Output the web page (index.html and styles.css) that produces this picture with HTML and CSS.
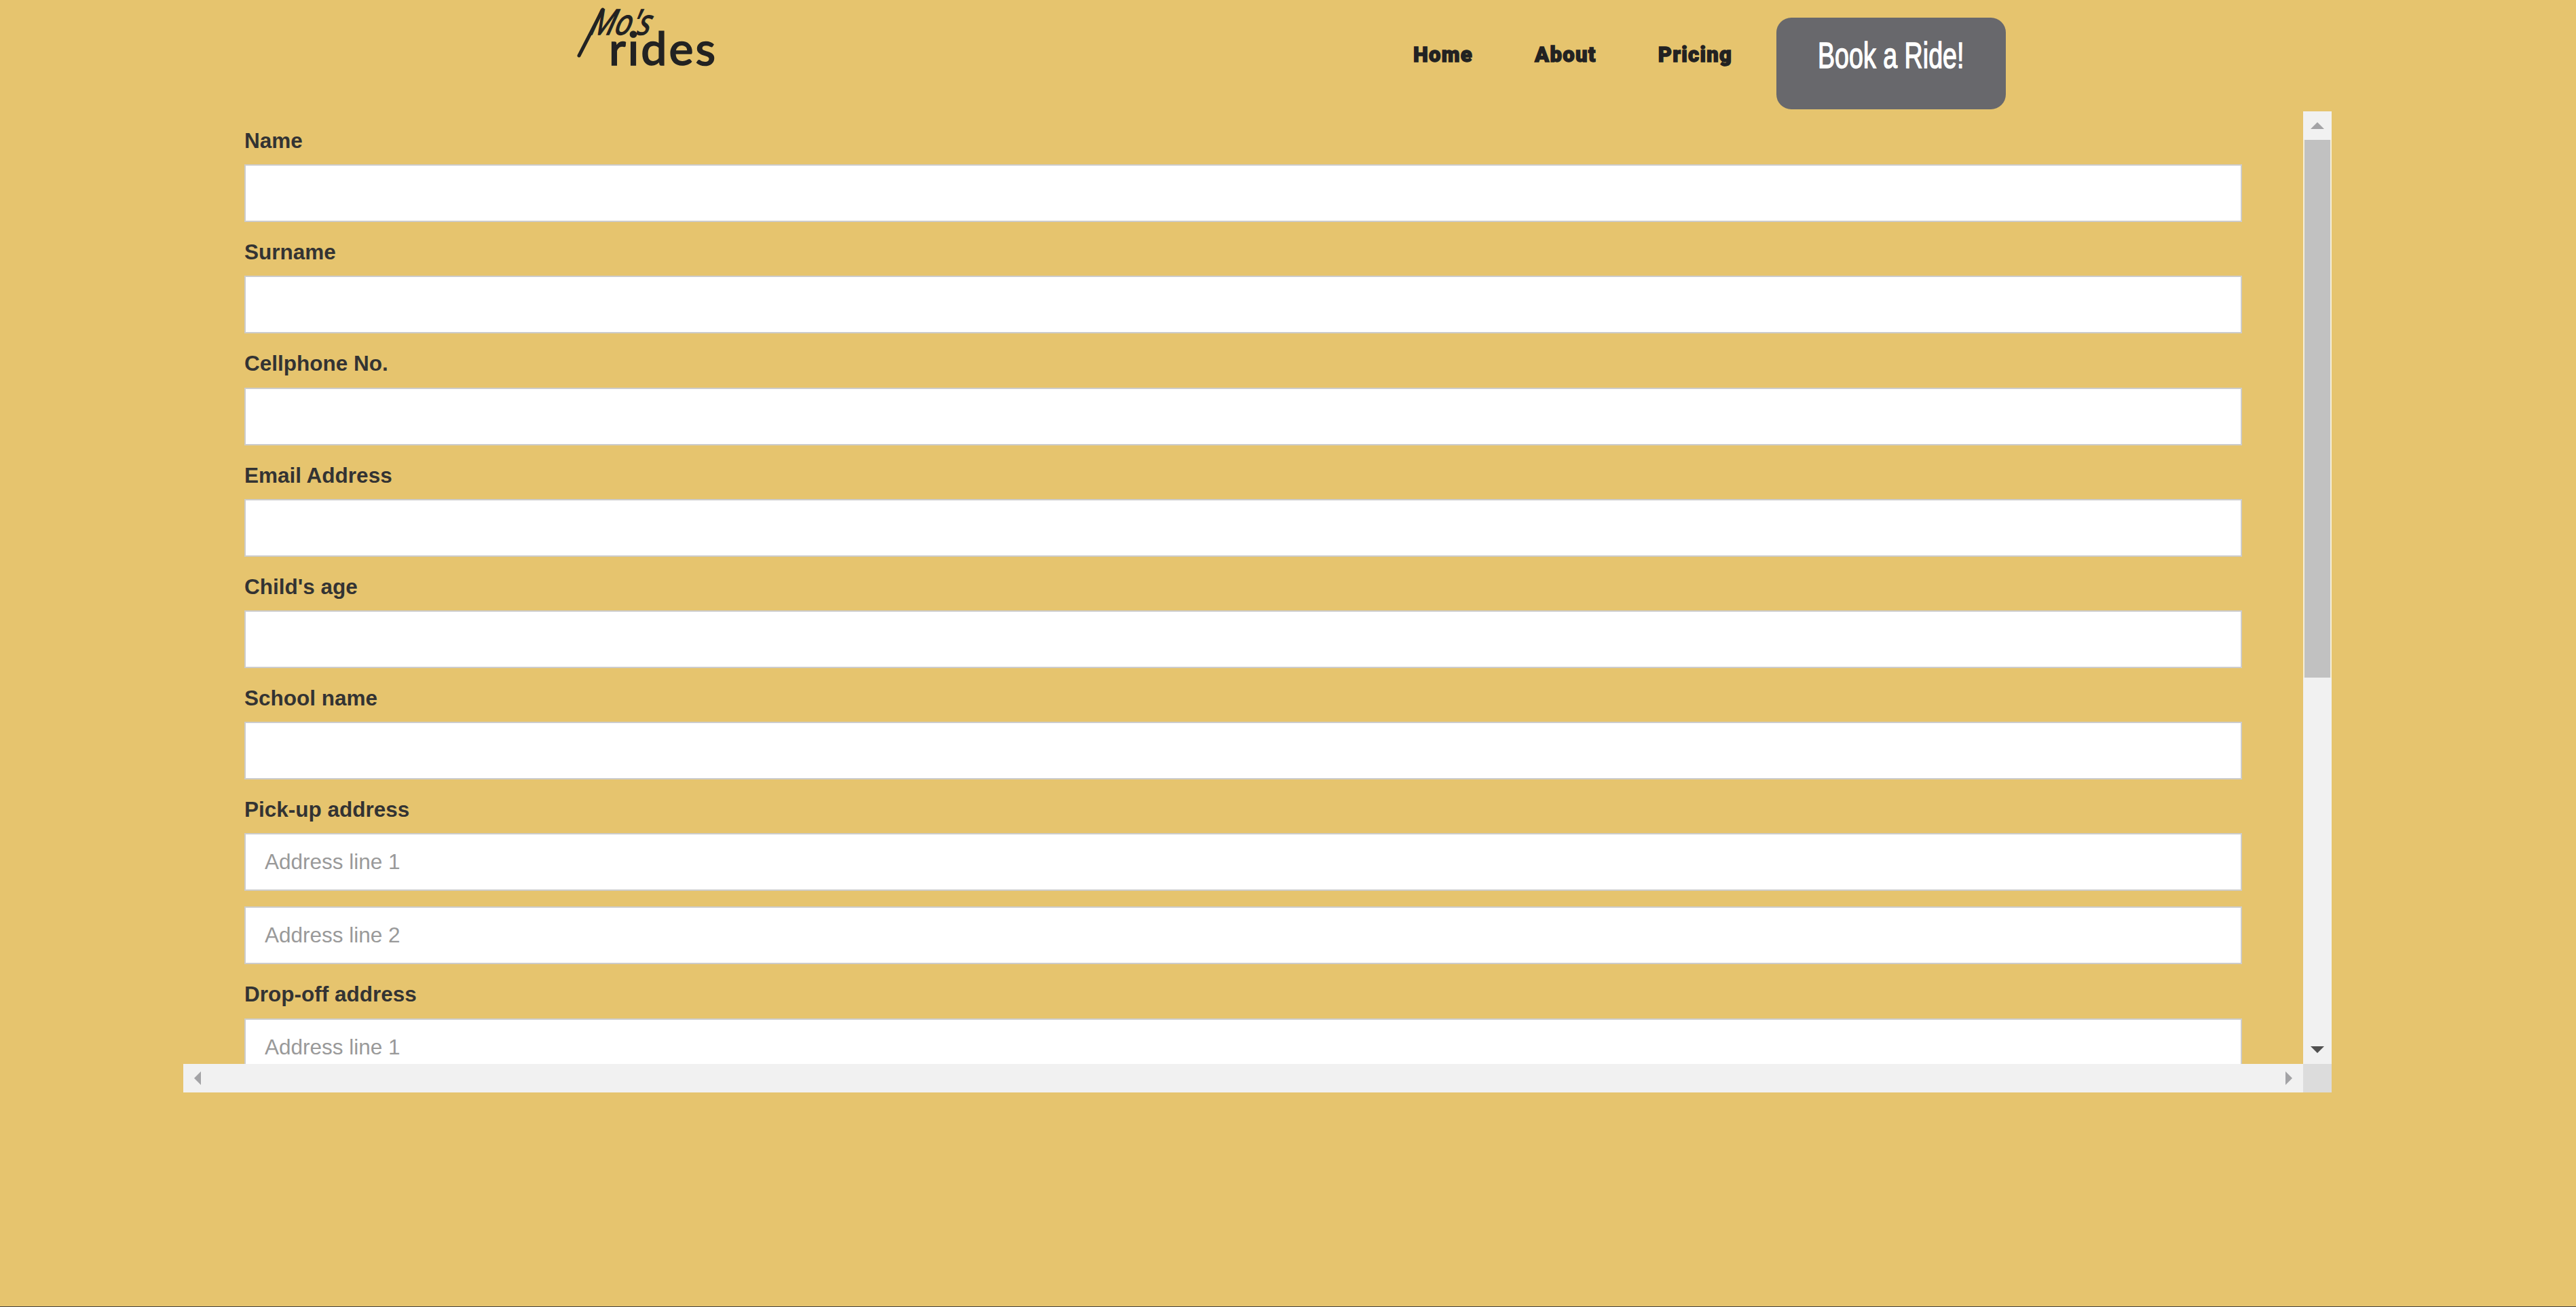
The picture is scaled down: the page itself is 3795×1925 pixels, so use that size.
FILE: index.html
```html
<!DOCTYPE html>
<html lang="en">
<head>
  <meta charset="UTF-8">
  <meta name="viewport" content="width=device-width, initial-scale=1.0">
  <title>Mo's rides</title>
  <link rel="stylesheet" href="styles.css">
</head>
<body>
  <header class="header">
    <a class="logo" href="#">
      <svg width="210" height="100" viewBox="0 0 210 100">
        <path class="logo-swash" d="M5 76 L40 8"/>
        <text class="logo-mos" transform="translate(19 45) skewX(-15) scale(.84 1)">Mo's</text>
        <text class="logo-rides" x="49" y="90" textLength="157">rides</text>
      </svg>
    </a>
    <nav class="nav">
      <a href="#">Home</a>
      <a href="#">About</a>
      <a href="#">Pricing</a>
      <a class="book" href="#"><span>Book a Ride!</span></a>
    </nav>
  </header>

  <main class="frame">
    <div class="viewport">
      <form class="form">
        <label>Name</label>
        <input type="text">
        <label>Surname</label>
        <input type="text">
        <label>Cellphone No.</label>
        <input type="text">
        <label>Email Address</label>
        <input type="text">
        <label>Child's age</label>
        <input type="text">
        <label>School name</label>
        <input type="text">
        <label>Pick-up address</label>
        <input type="text" placeholder="Address line 1">
        <input class="second" type="text" placeholder="Address line 2">
        <label>Drop-off address</label>
        <input type="text" placeholder="Address line 1">
      </form>
    </div>
    <div class="vbar">
      <div class="arrow-box"><svg width="20" height="10" viewBox="0 0 20 10"><path class="off" d="M10 0 L20 10 H0 Z"/></svg></div>
      <div class="thumb"></div>
      <div class="arrow-box bottom"><svg width="20" height="10" viewBox="0 0 20 10"><path class="on" d="M0 0 H20 L10 10 Z"/></svg></div>
    </div>
    <div class="hbar">
      <svg width="10" height="20" viewBox="0 0 10 20"><path class="off" d="M10 0 V20 L0 10 Z"/></svg>
      <svg width="10" height="20" viewBox="0 0 10 20"><path class="off" d="M0 0 L10 10 L0 20 Z"/></svg>
    </div>
    <div class="corner"></div>
  </main>
</body>
</html>
```

FILE: styles.css
```css
* {
  box-sizing: border-box;
}
body {
  margin: 0;
  height: 1925px;
  background-color: #e6c46e;
  border-bottom: 1px solid #444;
  font-family: "Liberation Sans", Arial, sans-serif;
  overflow: hidden;
}
.header {
  height: 164px;
  display: flex;
  padding-left: 848px;
}
.logo {
  display: block;
  padding-top: 6px;
}
.logo svg {
  overflow: visible;
}
.logo-swash {
  fill: none;
  stroke: #222;
  stroke-width: 5;
  stroke-linecap: round;
}
.logo-mos {
  font-family: "Open Sans", sans-serif;
  font-style: italic;
  font-size: 52px;
  fill: #222;
  stroke: #222;
  stroke-width: 1.5;
}
.logo-rides {
  font-family: Lato, sans-serif;
  font-size: 68px;
  font-weight: 500;
  fill: #222;
  stroke: #222;
  stroke-width: 1.5;
}
.nav {
  margin-left: 1024px;
  display: flex;
  align-items: flex-start;
}
.nav a {
  font-family: Roboto, sans-serif;
  font-weight: 900;
  font-size: 31px;
  letter-spacing: 1.3px;
  -webkit-text-stroke: 1.4px #222;
  color: #222;
  text-decoration: none;
  margin-right: 91px;
  padding-top: 62px;
}
.nav a.book {
  width: 338px;
  height: 135px;
  margin: 26px 0 0 -26px;
  padding: 29px 0 0;
  text-align: center;
  background-color: #68686c;
  border-radius: 22px;
  font-family: "Liberation Sans", sans-serif;
  font-weight: 400;
  font-size: 53px;
  line-height: 53px;
  letter-spacing: 0;
  -webkit-text-stroke: 1.4px #fff;
  color: #fff;
  white-space: nowrap;
}
.book span {
  display: inline-block;
  transform: scaleX(.71);
}
.frame {
  margin-left: 270px;
  width: 3165px;
  height: 1445px;
  display: grid;
  grid-template-columns: 3123px 42px;
  grid-template-rows: 1403px 42px;
}
.viewport {
  overflow: hidden;
  padding: 23px 90px 0;
}
.form {
  display: flex;
  flex-direction: column;
}
.form label {
  font-size: 31.5px;
  font-weight: bold;
  line-height: 36px;
  color: #333;
  padding-top: 2px;
  margin-bottom: 17.2px;
}
.form input {
  display: block;
  width: 100%;
  height: 85px;
  flex: none;
  margin-bottom: 24px;
  padding: 0 28px;
  background-color: #fff;
  border: 2px solid #ccc;
  border-radius: 0;
  font-family: inherit;
  font-size: 31.5px;
  outline: none;
}
.form input::placeholder {
  color: #999;
}
.form input.second {
  margin-top: -1px;
}
.vbar {
  background-color: #f1f1f1;
  display: flex;
  flex-direction: column;
}
.arrow-box {
  height: 42px;
  display: flex;
  align-items: center;
  justify-content: center;
}
.arrow-box.bottom {
  margin-top: auto;
}
.thumb {
  height: 792px;
  background-color: #c1c1c1;
  border: solid #f6efd6;
  border-width: 0 2px;
}
.off {
  fill: #a3a3a6;
}
.on {
  fill: #505050;
}
.hbar {
  background-color: #f1f1f1;
  display: flex;
  align-items: center;
  justify-content: space-between;
  padding: 0 16px;
}
.corner {
  background-color: #dcdcdc;
}
```
